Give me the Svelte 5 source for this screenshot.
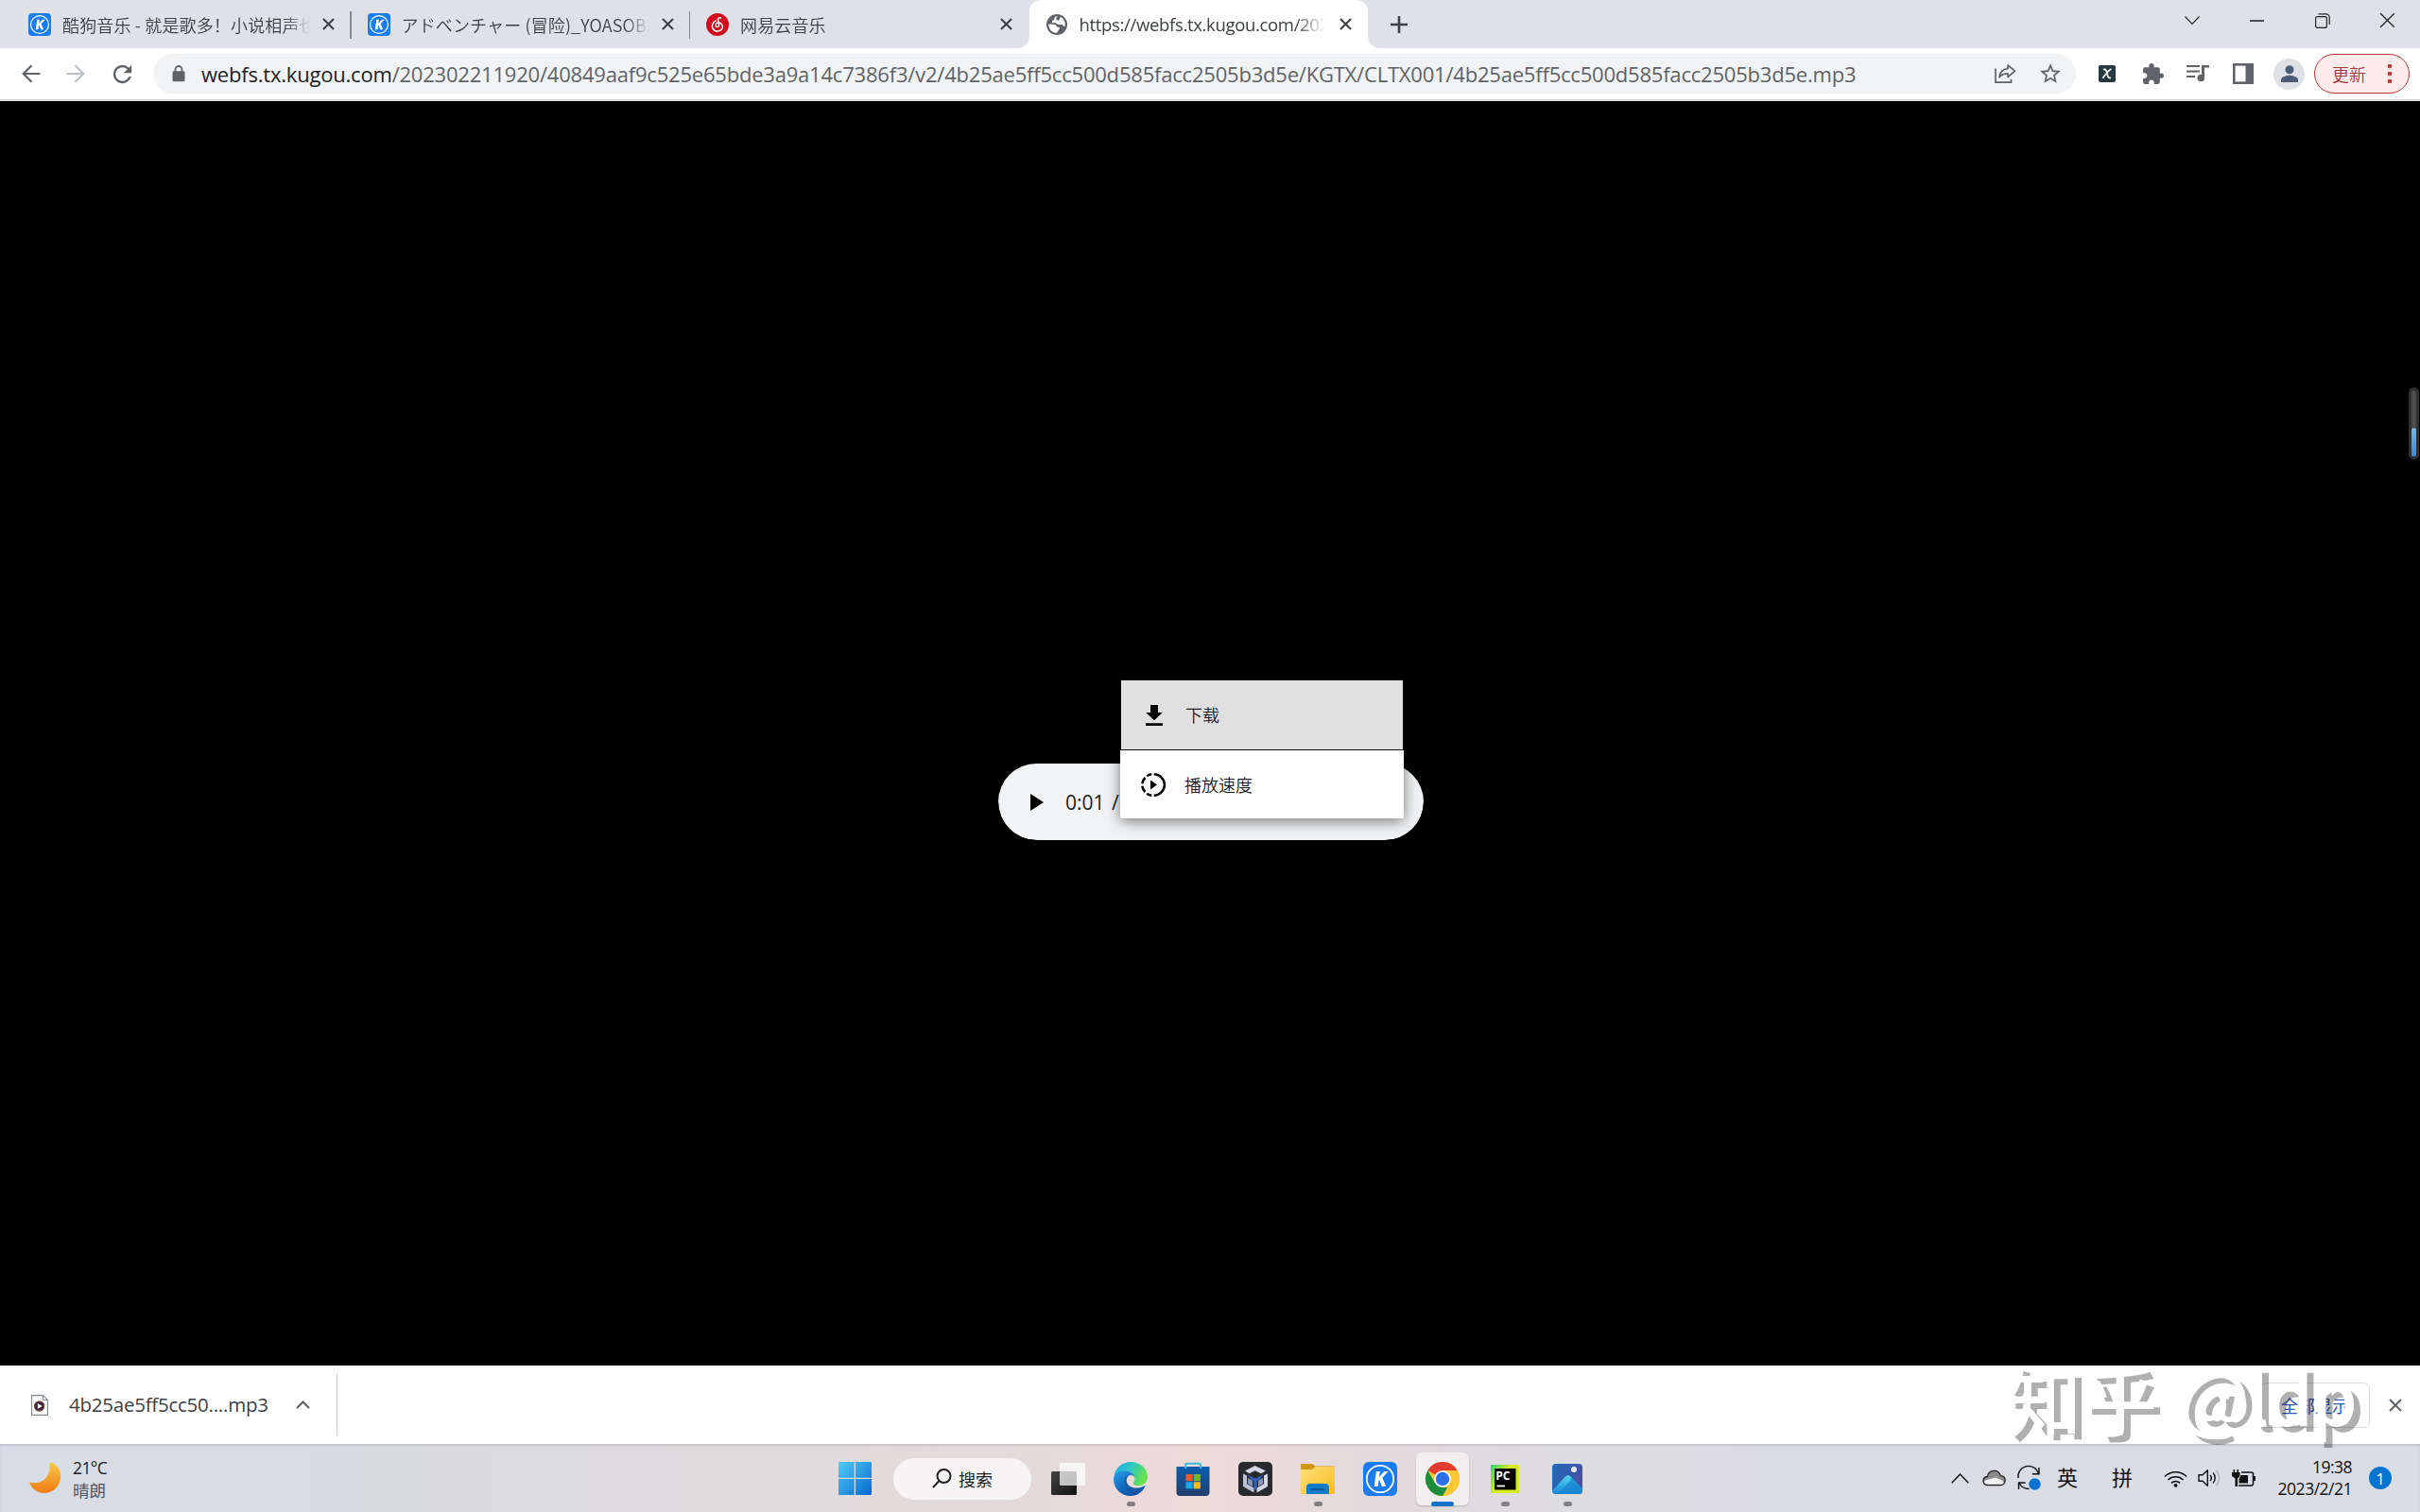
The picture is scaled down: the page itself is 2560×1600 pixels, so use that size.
<script>
  const tabs = [
    { title: '酷狗音乐 - 就是歌多！小说相声也精彩', icon: 'kugou', divider: true },
    { title: 'アドベンチャー (冒险)_YOASOBI_高音质', icon: 'kugou', divider: true },
    { title: '网易云音乐', icon: 'netease' },
    { title: 'https://webfs.tx.kugou.com/202302211920', icon: 'globe', active: true, latin: true }
  ];

  const host = 'webfs.tx.kugou.com';
  const path =
    '/202302211920/40849aaf9c525e65bde3a9a14c7386f3/v2/4b25ae5ff5cc500d585facc2505b3d5e/KGTX/CLTX001/4b25ae5ff5cc500d585facc2505b3d5e.mp3';

  const apps = [
    { name: 'taskview' },
    { name: 'edge', running: true },
    { name: 'store' },
    { name: 'cube' },
    { name: 'explorer', running: true },
    { name: 'kugou' },
    { name: 'chrome', running: true, active: true },
    { name: 'pycharm', running: true },
    { name: 'photos', running: true }
  ];
</script>

{#snippet kugou(size, radius)}
  <svg width={size} height={size} viewBox="0 0 36 36">
    <rect width="36" height="36" rx={radius} fill="#1a7cf2" />
    <circle cx="18" cy="18" r="14.2" fill="none" stroke="#fff" stroke-width="1.8" />
    <path d="M13.800 10h4l-.8 6 5.300-6h4.300l-6.200 6.800L24.200 26h-4.300l-2.700-7-.7.8-.8 6.200h-4z" fill="#fff" />
  </svg>
{/snippet}

{#snippet cross(size, width)}
  <svg width={size} height={size} viewBox="0 0 14 14" fill="none" stroke="currentColor" stroke-width={width}>
    <path d="M1 1l12 12M13 1L1 13" />
  </svg>
{/snippet}

<div class="screen">
  <header class="tabstrip">
    <div class="tabs">
      {#each tabs as tab}
        <div class="tab" class:active={tab.active} class:divider={tab.divider}>
          <span class="favicon">
            {#if tab.icon === 'kugou'}
              {@render kugou(24, 6)}
            {:else if tab.icon === 'netease'}
              <svg width="24" height="24" viewBox="0 0 24 24">
                <circle cx="12" cy="12" r="12" fill="#d20a1e" />
                <path d="M15.500 5.200c-1.600-1-3.200 0-2.900 1.700l1 5.200c.4 3.200-3.700 3-3.500.2.2-2.500 4-3.200 6-1.100 2.600 2.800 1 7.500-3.800 7.800-5 .3-7.400-5.200-4.700-8.900.8-1.100 1.800-1.800 3-2.200" fill="none" stroke="#fff" stroke-width="1.500" stroke-linecap="round" />
              </svg>
            {:else}
              <svg width="22" height="22" viewBox="2 2 20 20">
                <circle cx="12" cy="12" r="10" fill="#5f6368" />
                <path d="M4 11.500l4.500.3c2.500.2 3.500 1 3.500 2.700h2.500v1.700L12 20c-4.500 0-8-3.700-8-8.500zM10.500 4.300L9.500 6v2h-2v2.500H11l2 1.500h4l1.500 1.500h1.300c.8-4-1.300-7.500-4.300-9l-1.500 3.500h-2.500V5.500l1-1.500z" fill="#fff" />
              </svg>
            {/if}
          </span>
          <span class="title" class:latin={tab.latin}>{tab.title}</span>
          <span class="tab-close">{@render cross(13, 2.2)}</span>
        </div>
      {/each}
      <div class="new-tab">
        <svg width="18" height="18" viewBox="0 0 18 18" stroke="#3c4043" stroke-width="2.600"><path d="M9 0v18M0 9h18" /></svg>
      </div>
    </div>
    <div class="window-controls">
      <span><svg width="16" height="10" viewBox="0 0 16 10" fill="none" stroke="#222" stroke-width="1.100"><path d="M.5.5L8 8.500 15.500.5" /></svg></span>
      <span><svg width="15" height="2" viewBox="0 0 15 2"><path d="M0 1h15" stroke="#000" stroke-width="1.300" /></svg></span>
      <span>
        <svg width="16" height="16" viewBox="0 0 16 16" fill="none" stroke="#222" stroke-width="1.200">
          <rect x=".6" y="3.600" width="11.800" height="11.800" rx="2" /><path d="M3.500.8h8a3.700 3.700 0 0 1 3.700 3.700v7.500" />
        </svg>
      </span>
      <span class="dark">{@render cross(17, 1.1)}</span>
    </div>
  </header>

  <div class="toolbar">
    <div class="nav">
      <svg width="20" height="20" viewBox="0 0 20 20" fill="none" stroke="#5f6368" stroke-width="2.200"><path d="M19.500 10H2M10.500 1.200L1.700 10l8.800 8.800" /></svg>
      <svg width="20" height="20" viewBox="0 0 20 20" fill="none" stroke="#bdc1c6" stroke-width="2.200"><path d="M.5 10H18M9.500 1.200l8.800 8.800-8.800 8.800" /></svg>
      <svg width="29" height="29" viewBox="0 0 24 24" fill="#5f6368"><path d="M17.650 6.350A7.960 7.960 0 0 0 12 4a8 8 0 1 0 7.730 10h-2.080A6 6 0 1 1 12 6c1.660 0 3.140.69 4.220 1.780L13 11h7V4z" /></svg>
    </div>
    <div class="omnibox">
      <svg class="lock" width="14" height="18" viewBox="0 0 14 18" fill="#5f6368"><path d="M3.500 7V4.500a3.500 3.500 0 0 1 7 0V7" fill="none" stroke="#5f6368" stroke-width="1.800" /><rect x=".5" y="6.300" width="13" height="11" rx="1.500" /></svg>
      <div class="url"><span>{host}</span>{path}</div>
      <svg class="share" width="24" height="22" viewBox="0 0 24 22" fill="none" stroke="#5f6368" stroke-width="1.700">
        <path d="M2 5.500v14.700h16.500v-3.500" /><path d="M15 2l7.500 6.200L15 14.500v-3.700c-4 0-6.800 1-9 3.800.5-5 3.500-8.500 9-9z" stroke-linejoin="round" />
      </svg>
      <svg width="26" height="26" viewBox="0 0 24 24" fill="#5f6368"><path d="M22 9.240l-7.190-.62L12 2 9.190 8.630 2 9.240l5.460 4.730L5.820 21 12 17.270 18.180 21l-1.630-7.030L22 9.240zM12 15.400l-3.760 2.270 1-4.280-3.320-2.880 4.380-.38L12 6.100l1.710 4.040 4.380.38-3.320 2.880 1 4.280L12 15.400z" /></svg>
    </div>
    <div class="extensions">
      <span>
        <svg width="18" height="18" viewBox="0 0 18 18"><rect width="18" height="18" rx="2" fill="#263840" /><path d="M5 4.500c3-.8 3.200 1 4 4.500s1.500 5 4 4.200M13.500 4C10.500 5 6.500 11 4.300 13.700" fill="none" stroke="#fff" stroke-width="1.600" /></svg>
      </span>
      <span>
        <svg width="25" height="25" viewBox="0 0 24 24" fill="#5f6368"><path d="M20.500 11H19V7c0-1.100-.9-2-2-2h-4V3.500a2.500 2.500 0 0 0-5 0V5H4c-1.100 0-1.990.9-1.990 2v3.800H3.500c1.490 0 2.700 1.210 2.700 2.700s-1.210 2.700-2.700 2.700H2V20c0 1.100.9 2 2 2h3.800v-1.500c0-1.490 1.210-2.700 2.700-2.700s2.700 1.210 2.700 2.700V22H17c1.100 0 2-.9 2-2v-4h1.500a2.500 2.500 0 0 0 0-5z" /></svg>
      </span>
      <span>
        <svg width="24" height="20" viewBox="0 0 24 20" fill="#5f6368"><path d="M0 1h14v2H0zM0 6.500h14v2H0zM0 12h9v2H0zM16 1h8v2.500h-5V14h-3z" /><circle cx="15.300" cy="14.500" r="3.800" /></svg>
      </span>
      <span>
        <svg width="22" height="22" viewBox="0 0 22 22"><rect x="1.300" y="1.300" width="19.400" height="19.400" fill="none" stroke="#5f6368" stroke-width="2.600" /><path d="M13.500 1H21v20h-7.500z" fill="#5f6368" /></svg>
      </span>
      <span class="profile">
        <svg width="18" height="18" viewBox="0 0 18 18" fill="#4b5c78"><circle cx="9" cy="4.700" r="4.500" /><path d="M0 18v-2.600c0-3 6-4.600 9-4.600s9 1.600 9 4.600V18z" /></svg>
      </span>
    </div>
    <div class="update">
      更新
      <svg width="6" height="22" viewBox="0 0 6 22" fill="#b3383c"><circle cx="3" cy="3" r="2.300" /><circle cx="3" cy="11" r="2.300" /><circle cx="3" cy="19" r="2.300" /></svg>
    </div>
  </div>

  <main class="page">
    <div class="player">
      <svg width="14" height="18" viewBox="0 0 14 18"><path d="M0 0l14 9-14 9z" /></svg>
      <span class="time">0:01 /</span>
      <div class="menu">
        <div class="menu-item hover">
          <svg width="18" height="22" viewBox="0 0 18 22"><path d="M5 0h8v8h4.800L9 16.300.2 8H5zM0 19.300h18V22H0z" /></svg>
          <span>下载</span>
        </div>
        <div class="menu-item">
          <svg width="25" height="25" viewBox="0 0 25 25" fill="none" stroke="#000" stroke-width="2.500">
            <path d="M13.700 1.300a11.200 11.200 0 0 1 0 22.400" />
            <path d="M11.300 1.300a11.200 11.200 0 0 0-5.100 2M4.400 5a11.200 11.200 0 0 0-3.100 6.200M1.300 13.800A11.200 11.200 0 0 0 4.400 20M6.200 21.700a11.200 11.200 0 0 0 5.100 2" />
            <path d="M10 7.500l7 5-7 5z" fill="#000" stroke="none" />
          </svg>
          <span>播放速度</span>
        </div>
      </div>
    </div>
    <div class="level"><div></div></div>
  </main>

  <div class="downloads">
    <div class="file">
      <svg width="18" height="22" viewBox="0 0 18 22"><path d="M.6.6h12l4.800 4.800v16H.6z" fill="#fff" stroke="#7f8790" stroke-width="1.100" /><path d="M12.600.6v4.800h4.800" fill="none" stroke="#7f8790" /><circle cx="8.600" cy="12" r="5.600" fill="#33213a" /><circle cx="8.600" cy="12" r="5" fill="none" stroke="#a65b3c" stroke-width=".8" /><path d="M6.800 9l5 3-5 3z" fill="#fff" /></svg>
      <span class="filename">4b25ae5ff5cc50....mp3</span>
      <svg width="15" height="9" viewBox="0 0 15 9" fill="none" stroke="#5f6368" stroke-width="2.200"><path d="M1 8l6.500-6.500L14 8" /></svg>
    </div>
    <button class="show-all">全部显示</button>
    <span class="bar-close">{@render cross(14, 2)}</span>
    <div class="watermark">知乎 <span>@ldp</span></div>
  </div>

  <footer class="taskbar">
    <div class="weather">
      <svg width="34" height="34" viewBox="0 0 34 34">
        <defs><linearGradient id="moon" x1="0" y1="0" x2="0" y2="1"><stop offset="0" stop-color="#f7c944" /><stop offset="1" stop-color="#f07b16" /></linearGradient></defs>
        <path d="M22.500.5C30 3 34 9.500 33 17.500c-1.200 9-8.500 15.500-17.300 15.500C9 33 2.500 28.500.5 22.800c-.2-.8.300-1.200 1-1 12 2.500 21.700-6 20-20.300 0-.8.400-1.200 1-1z" fill="url(#moon)" />
      </svg>
      <div class="weather-text"><div>21°C</div><div class="muted">晴朗</div></div>
    </div>

    <div class="start">
      <svg width="35" height="35" viewBox="0 0 35 35">
        <defs><linearGradient id="win" x1="0" y1="0" x2="1" y2="1"><stop offset="0" stop-color="#54cdf8" /><stop offset="1" stop-color="#0368cf" /></linearGradient></defs>
        <path d="M1 0h15.700v16.700H0V1a1 1 0 0 1 1-1zM18 0h16a1 1 0 0 1 1 1v15.700H18zM0 18h16.700v17H1a1 1 0 0 1-1-1zM18 18h17v16a1 1 0 0 1-1 1H18z" fill="url(#win)" />
      </svg>
    </div>
    <div class="search">
      <svg width="21" height="21" viewBox="0 0 21 21" fill="none" stroke="#222" stroke-width="2"><circle cx="12.500" cy="8" r="7" /><path d="M7.500 13L1 20" /></svg>
      搜索
    </div>

    <div class="apps">
      {#each apps as app}
        <div class="app">
          <div class="tile" class:current={app.active}>
            {#if app.name === 'taskview'}
              <svg width="36" height="34" viewBox="0 0 36 34">
                <defs><linearGradient id="tv" x1="0" y1="0" x2="1" y2="1"><stop offset="0" stop-color="#444" /><stop offset="1" stop-color="#111" /></linearGradient></defs>
                <rect y="9" width="27" height="25" rx="1.500" fill="url(#tv)" /><rect x="9" width="27" height="24" rx="1.500" fill="#fff" opacity=".72" />
              </svg>
            {:else if app.name === 'edge'}
              <svg width="36" height="36" viewBox="0 0 36 36">
                <defs>
                  <linearGradient id="e1" x1="0" y1="0" x2="1" y2=".35"><stop offset="0" stop-color="#1caae6" /><stop offset=".55" stop-color="#31c9c1" /><stop offset="1" stop-color="#66e34d" /></linearGradient>
                  <linearGradient id="e2" x1="0" y1="0" x2=".6" y2="1"><stop offset="0" stop-color="#239be4" /><stop offset="1" stop-color="#0c4ea4" /></linearGradient>
                </defs>
                <path d="M.3 16C1.500 6.500 9 0 18 0c10.500 0 18 7.500 18 15.500 0 6-4.500 9.700-9.500 9.700-4 0-6-1.500-5.700-2.800.3-1 1.700-1.600 1.700-4.400 0-5-5-8.500-10.500-8.500C6.500 9.500 2 12.500.3 16z" fill="url(#e1)" />
                <path d="M0 18C.5 12.500 6 9.300 11.800 9.300c5.700 0 10.700 3.700 10.700 8.200 0-2-2-3.500-4.300-3.500-3 0-5 2.700-5 6 0 6 6 9.700 11.800 9.200 3.800-.3 6.300-1.800 8.200-2.900C30.500 32 25 36 18 36 8 36 0 28.500 0 18z" fill="url(#e2)" />
                <path d="M12 17.500c-2 8 3.500 14.500 12 15.300 3.800-.8 7.300-3.500 9.400-7 .4-.8-.3-1-.8-.6-7 4.600-19 2.300-19-5.700 0-2.500 1.300-4.300 3-5-2 .2-4 1-4.600 3z" fill="#135aa8" />
              </svg>
            {:else if app.name === 'store'}
              <svg width="36" height="36" viewBox="0 0 36 36">
                <defs><linearGradient id="st" x1="0" y1="0" x2="0" y2="1"><stop offset="0" stop-color="#0b5fae" /><stop offset="1" stop-color="#213f6c" /></linearGradient></defs>
                <path d="M.5 5h35v27a4 4 0 0 1-4 4h-27a4 4 0 0 1-4-4z" fill="url(#st)" />
                <path d="M10 7V3.500a1.800 1.800 0 0 1 1.800-1.800h12.400A1.800 1.800 0 0 1 26 3.500V7" fill="none" stroke="#35bde6" stroke-width="2" />
                <path d="M10.500 13H17.700v7.200h-7.200z" fill="#f15a2b" /><path d="M18.700 13h7.200v7.200h-7.200z" fill="#75b51d" /><path d="M10.500 21.200h7.200v7.200h-7.200z" fill="#18a7ef" /><path d="M18.700 21.200h7.200v7.200h-7.200z" fill="#fdbb16" />
              </svg>
            {:else if app.name === 'cube'}
              <svg width="36" height="36" viewBox="0 0 36 36">
                <rect width="36" height="36" rx="5" fill="#292a2e" />
                <path d="M7 9.500L17.500 4 29 9.500l-5 2.800-6.300-3-6 3z" fill="#d4d8e5" />
                <path d="M5 12.500l4 2v8.800l7.500 4.200v5L5 26z" fill="#bac2d8" /><path d="M31 12.500l-4 2v8.800l-7.500 4.200v5L31 26z" fill="#d3d8e7" />
                <path d="M10 13.500l8 4.300 8-4.300-3 5-3.300 2v8L18 29.500l-1.700-1v-8L13 18.500z" fill="#2f62bd" />
                <path d="M10 17l5 3v6l-5-3zM26 17l-5 3v6l5-3z" fill="#8a96b5" />
              </svg>
            {:else if app.name === 'explorer'}
              <svg width="36" height="34" viewBox="0 0 36 34">
                <defs><linearGradient id="fo" x1="0" y1="0" x2="1" y2="1"><stop offset="0" stop-color="#ffdf7a" /><stop offset="1" stop-color="#f9bd20" /></linearGradient></defs>
                <path d="M0 2a1 1 0 0 1 1-1h11l3.500 2.500H35a1 1 0 0 1 1 1V15H0z" fill="#d29513" />
                <path d="M0 7h12l3.500-3H36v29H0z" fill="url(#fo)" />
                <path d="M6 33v-7a4 4 0 0 1 4-4h16a4 4 0 0 1 4 4v7z" fill="#0f7cc9" /><path d="M11 28h14" stroke="#0a4f8d" stroke-width="1.600" />
              </svg>
            {:else if app.name === 'kugou'}
              {@render kugou(36, 6)}
            {:else if app.name === 'chrome'}
              <svg width="36" height="36" viewBox="0 0 36 36">
                <circle cx="18" cy="18" r="18" fill="#fcc934" />
                <path d="M18 18L2.400 9A18 18 0 0 1 33.600 9H18z" fill="#e23b2e" />
                <path d="M2.400 9l7.800 13.500L18 27h7.800L18 36A18 18 0 0 1 2.400 9z" fill="#1e8e3e" />
                <path d="M25.800 22.500L18 36A18 18 0 0 0 33.600 9H18z" fill="#fcc934" />
                <circle cx="18" cy="18" r="9" fill="#fff" /><circle cx="18" cy="18" r="7.200" fill="#2b70e8" />
              </svg>
            {:else if app.name === 'pycharm'}
              <svg width="30" height="30" viewBox="0 0 30 30">
                <defs><linearGradient id="py" x1="0" y1="0" x2=".5" y2=".3"><stop offset="0" stop-color="#22d56b" /><stop offset="1" stop-color="#d6eb21" /></linearGradient></defs>
                <rect width="30" height="30" rx="1" fill="url(#py)" /><rect x="4" y="4" width="22.500" height="22.500" fill="#050505" />
                <text x="5.300" y="15.500" class="pc">PC</text><path d="M6.500 22.500H15" stroke="#fff" stroke-width="1.700" />
              </svg>
            {:else}
              <svg width="32" height="32" viewBox="0 0 32 32">
                <defs>
                  <linearGradient id="ph" x1="0" y1="0" x2="1" y2=".4"><stop offset="0" stop-color="#1d6cb9" /><stop offset="1" stop-color="#4a50a6" /></linearGradient>
                  <linearGradient id="mt" x1="0" y1="0" x2="0" y2="1"><stop offset="0" stop-color="#54d6f4" /><stop offset="1" stop-color="#1687d9" /></linearGradient>
                </defs>
                <rect width="32" height="32" rx="4" fill="url(#ph)" /><circle cx="23" cy="6" r="3" fill="#e8f3ff" />
                <path d="M0 28.500L14 13.500c1.700-1.800 4-1.800 5.600 0L32 26.500V28a4 4 0 0 1-4 4H4a4 4 0 0 1-4-3.500z" fill="url(#mt)" />
                <path d="M19.500 13.400L32 26.500V28a4 4 0 0 1-4 4H6L18.500 18.500c1.500-1.700 2-3.600 1-5.100z" fill="#1583cc" opacity=".7" />
              </svg>
            {/if}
          </div>
          {#if app.running}<i class="indicator" class:wide={app.active}></i>{/if}
        </div>
      {/each}
    </div>

    <div class="tray">
      <svg width="19" height="11" viewBox="0 0 19 11" fill="none" stroke="#111" stroke-width="1.400"><path d="M.7 10.300L9.500 1l8.800 9.300" /></svg>
      <svg class="cloud" width="25" height="18" viewBox="0 0 25 18"><path d="M6 16.500c-6.500 0-6.500-8.500-.6-9 1.200-7 11.200-9 14-.9 6.500.3 6 9.900 0 9.900z" fill="#8b8b8b" stroke="#222" stroke-width="1.300" /><path d="M1.800 13c2.500-3 5.700-2 12-4.500 4 1.500 7.500 3 9 5-.8 1.500-2 2.300-3.400 2.300H6c-2 0-3.500-1-4.200-2.800z" fill="#f1f1f1" /></svg>
      <svg class="sync" width="25" height="25" viewBox="0 0 25 25" fill="none" stroke="#111" stroke-width="1.400"><path d="M1 12A11 11 0 0 1 22.500 7.500M23 1v6.800h-7M1.500 24v-7h7M2 17.500c2.500 4.500 6 6 10.500 6" /><circle cx="18.500" cy="18.500" r="6.200" fill="#0874d1" stroke="none" /></svg>
      <span class="ime">英</span>
      <span class="ime second">拼</span>
      <svg class="wifi" width="25" height="19" viewBox="0 0 25 19" fill="none" stroke="#111" stroke-width="1.600"><path d="M1 7.500a16.300 16.300 0 0 1 23 0M4.500 11a11.500 11.500 0 0 1 16 0M8 14.300a6.500 6.500 0 0 1 9 0" /><circle cx="12.500" cy="16.800" r="1.900" fill="#111" stroke="none" /></svg>
      <svg class="volume" width="24" height="20" viewBox="0 0 24 20" fill="none" stroke="#111" stroke-width="1.400"><path d="M1 6.800h4l5.300-5v16.400l-5.300-5H1z" stroke-linejoin="round" /><path d="M13 7a4.500 4.500 0 0 1 0 6M16 4.500a8 8 0 0 1 0 11" /><path d="M19.500 2a12 12 0 0 1 0 16" stroke="#b5b7bc" /></svg>
      <svg class="battery" width="25" height="20" viewBox="0 0 25 20" fill="#111"><path d="M1.500 1h1.600v3h2.300V1H7v3h1.500v4L6 10.500V19H3.500v-8.500L0 8V4h1.500z" /><path d="M10 4h10.500a2 2 0 0 1 2 2v10a2 2 0 0 1-2 2H7" fill="none" stroke="#111" stroke-width="1.500" /><path d="M9.500 7H17v8.500H7.500V11zM23 8h2v5h-2z" /></svg>
      <div class="clock"><div>19:38</div><div>2023/2/21</div></div>
      <span class="badge">1</span>
    </div>
  </footer>
</div>

<style>
  :global(body) {
    margin: 0;
    overflow: hidden;
    background: #000;
  }

  .screen {
    width: 2560px;
    height: 1600px;
    display: flex;
    flex-direction: column;
    font-family: 'Open Sans', 'Noto Sans CJK SC', sans-serif;
    color: #202124;
    overflow: hidden;
  }

  svg {
    display: block;
    flex: none;
    overflow: visible;
  }

  .tabstrip {
    height: 51px;
    flex: none;
    display: flex;
    justify-content: space-between;
    background: #dee1e6;
  }

  .tabs {
    display: flex;
    padding-left: 13px;
  }

  .tab {
    width: 358.5px;
    height: 51px;
    box-sizing: border-box;
    padding: 0 17px;
    display: flex;
    align-items: center;
    position: relative;
    color: #3c4043;
  }

  .tab.divider::after {
    content: '';
    position: absolute;
    right: 0;
    top: 12px;
    width: 1.5px;
    height: 29px;
    background: #85888d;
  }

  .tab.active {
    background: #fff;
    border-radius: 12px 12px 0 0;
  }

  .tab.active::before,
  .tab.active::after {
    content: '';
    position: absolute;
    bottom: 0;
    width: 12px;
    height: 12px;
  }

  .tab.active::before {
    left: -12px;
    background: radial-gradient(circle at 0 0, transparent 11.5px, #fff 12px);
  }

  .tab.active::after {
    right: -12px;
    background: radial-gradient(circle at 100% 0, transparent 11.5px, #fff 12px);
  }

  .favicon {
    width: 24px;
    margin-right: 12px;
    display: flex;
    justify-content: center;
  }

  .title {
    width: 262px;
    margin-right: 13px;
    overflow: hidden;
    white-space: nowrap;
    font-family: 'Noto Sans CJK SC', sans-serif;
    font-size: 18px;
    line-height: 30px;
    letter-spacing: 0.15px;
    font-weight: 350;
    mask-image: linear-gradient(to right, #000 236px, transparent 262px);
  }

  .title.latin {
    font-family: 'Open Sans', sans-serif;
    font-size: 18.5px;
    font-weight: 400;
    letter-spacing: -0.33px;
    mask-image: linear-gradient(to right, #000 228px, transparent 260px);
  }

  .tab-close {
    width: 13px;
    flex: none;
    color: #3c4043;
  }

  .new-tab {
    width: 66px;
    display: grid;
    place-items: center;
  }

  .window-controls {
    display: flex;
    height: 43px;
  }

  .window-controls span {
    width: 69px;
    display: grid;
    place-items: center;
  }

  .window-controls .dark {
    color: #222;
  }

  .toolbar {
    height: 56px;
    box-sizing: border-box;
    flex: none;
    display: flex;
    align-items: center;
    background: #fff;
    border-bottom: 2px solid #dadce0;
  }

  .nav {
    width: 139px;
    padding-left: 23px;
    display: flex;
    align-items: center;
  }

  .nav svg:nth-child(2) {
    margin-left: 27px;
  }

  .nav svg:nth-child(3) {
    margin-left: 25px;
  }

  .omnibox {
    width: 2034px;
    height: 42px;
    box-sizing: border-box;
    padding: 0 14px 0 20px;
    border-radius: 21px;
    background: #f1f3f4;
    display: flex;
    align-items: center;
  }

  .url {
    flex: 1;
    margin: -1px 0 0 17px;
    font-size: 22px;
    line-height: 30px;
    letter-spacing: -0.205px;
    white-space: nowrap;
    color: #5f6368;
  }

  .url span {
    color: #202124;
  }

  .share {
    margin-right: 23px;
  }

  .extensions {
    margin-left: 9px;
    display: flex;
    align-items: center;
  }

  .extensions span {
    width: 48px;
    display: grid;
    place-items: center;
  }

  .extensions .profile {
    width: 33px;
    height: 33px;
    margin: 0 8px;
    border-radius: 50%;
    background: #dee1e6;
  }

  .update {
    width: 101px;
    height: 42px;
    box-sizing: border-box;
    margin-left: 2px;
    padding: 0 17px 0 18px;
    border: 1.5px solid #b3383c;
    border-radius: 21px;
    background: #fbeceb;
    display: flex;
    align-items: center;
    justify-content: space-between;
    font-size: 18px;
    font-weight: 350;
    color: #a4333a;
  }

  .page {
    height: 1338px;
    flex: none;
    background: #000;
    position: relative;
    display: flex;
    justify-content: center;
    align-items: center;
  }

  .player {
    width: 450px;
    height: 81px;
    box-sizing: border-box;
    margin: 145px 0 0 2px;
    padding-left: 34px;
    border-radius: 41px;
    background: #f1f3f4;
    display: flex;
    align-items: center;
    position: relative;
    clip-path: inset(-100px 0 0 0 round 0 0 41px 41px);
  }

  .time {
    margin-left: 23px;
    font-size: 21px;
    word-spacing: 2px;
    white-space: nowrap;
  }

  .menu {
    position: absolute;
    left: 129px;
    top: -89px;
    width: 300px;
    background: #fff;
    border-radius: 2px;
    box-shadow: 0 3px 15px rgba(0, 0, 0, 0.5);
  }

  .menu-item {
    height: 72px;
    display: flex;
    align-items: center;
    padding-left: 22px;
    font-size: 18px;
    font-weight: 350;
  }

  .menu-item span {
    margin: -1px 0 0 21px;
  }

  .menu-item.hover {
    height: 75px;
    box-sizing: border-box;
    border: 1px solid #101010;
    background: #e0e0e0;
    padding-left: 26px;
  }

  .menu-item.hover span {
    margin-left: 24px;
  }

  .level {
    position: absolute;
    left: 2548px;
    top: 303px;
    width: 5px;
    height: 70px;
    border: 3px solid #303030;
    border-radius: 6px;
    background: #4c4c4c;
    display: flex;
    align-items: flex-end;
  }

  .level div {
    width: 5px;
    height: 30px;
    border-radius: 2px;
    background: linear-gradient(#75b9ed, #3385e0);
  }

  .downloads {
    height: 83px;
    flex: none;
    position: relative;
    z-index: 1;
    display: flex;
    align-items: center;
    background: #fff;
  }

  .file {
    width: 357px;
    height: 65px;
    box-sizing: border-box;
    padding-left: 33px;
    border-right: 1px solid #c4c7cc;
    display: flex;
    align-items: center;
  }

  .filename {
    width: 212px;
    margin: -2px 28px 0 22px;
    font-size: 20.5px;
    letter-spacing: -0.24px;
    white-space: nowrap;
    color: #3c4043;
  }

  .show-all {
    width: 116px;
    height: 48px;
    margin-left: auto;
    padding: 0;
    border: 1px solid #dadce0;
    border-radius: 6px;
    background: #fff;
    font: 18px 'Noto Sans CJK SC', sans-serif;
    color: #2a5bb8;
  }

  .bar-close {
    width: 14px;
    margin: 0 19px 0 20px;
    color: #5f6368;
  }

  .watermark {
    position: absolute;
    left: 2122px;
    top: -25px;
    font: 500 80px/116px 'Noto Sans CJK SC', sans-serif;
    white-space: nowrap;
    color: #fff;
    text-shadow: 7px 6px 0 rgba(0, 0, 0, 0.31);
  }

  .watermark span {
    display: inline-block;
    margin-left: 4px;
    font-size: 78px;
    letter-spacing: -2.5px;
    transform: translateY(-4px);
  }

  .taskbar {
    height: 72px;
    flex: none;
    display: flex;
    align-items: center;
    background: linear-gradient(90deg, #d7dde7 0, #dadbdf 400px, #dfdbdc 850px, #e4dadb 1090px, #efdad7 1270px, #e3dadd 1450px, #dddce1 1650px, #dadce2 2050px, #dadde5 2560px);
    box-shadow: inset 0 2px 2px rgba(80, 80, 90, 0.16);
  }

  .weather {
    width: 871px;
    box-sizing: border-box;
    padding-left: 31px;
    display: flex;
    align-items: center;
  }

  .weather-text {
    margin: 2px 0 0 12px;
    font-size: 17.5px;
    line-height: 24px;
    letter-spacing: -0.6px;
  }

  .muted {
    letter-spacing: 0;
    color: #55585e;
  }

  .start {
    width: 66px;
    display: grid;
    place-items: center;
  }

  .search {
    width: 146px;
    height: 44px;
    margin: 1px 6px 0 8px;
    border-radius: 22px;
    background: #f7f4f5;
    display: flex;
    align-items: center;
    justify-content: center;
    gap: 7px;
    font-size: 18px;
  }

  .apps {
    display: flex;
  }

  .app {
    width: 66px;
    height: 72px;
    display: flex;
    justify-content: center;
    position: relative;
  }

  .tile {
    width: 56px;
    height: 56px;
    margin-top: 9px;
    border-radius: 6px;
    display: grid;
    place-items: center;
  }

  .tile.current {
    background: #f1eeef;
    box-shadow: 0 1px 2px rgba(0, 0, 0, 0.18);
  }

  .indicator {
    position: absolute;
    bottom: 6px;
    width: 9px;
    height: 5px;
    border-radius: 3px;
    background: #858083;
  }

  .indicator.wide {
    width: 24px;
    background: #1272c7;
  }

  .pc {
    font: 700 12px 'Open Sans', sans-serif;
    fill: #fff;
  }

  .tray {
    margin-left: auto;
    padding-right: 30px;
    display: flex;
    align-items: center;
    color: #111;
  }

  .cloud {
    margin-left: 14px;
  }

  .sync {
    margin-left: 12px;
  }

  .ime {
    margin: -2px 0 0 17px;
    font-size: 22px;
    line-height: 30px;
  }

  .ime.second {
    margin-left: 36px;
  }

  .wifi {
    margin-left: 33px;
  }

  .volume {
    margin-left: 11px;
  }

  .battery {
    margin-left: 12px;
  }

  .clock {
    width: 102px;
    font-size: 17.5px;
    line-height: 23px;
    letter-spacing: -0.5px;
    text-align: right;
  }

  .badge {
    width: 24px;
    height: 24px;
    margin-left: 18px;
    border-radius: 50%;
    background: #0874d1;
    color: #fff;
    display: grid;
    place-items: center;
    font-size: 17px;
  }
</style>
